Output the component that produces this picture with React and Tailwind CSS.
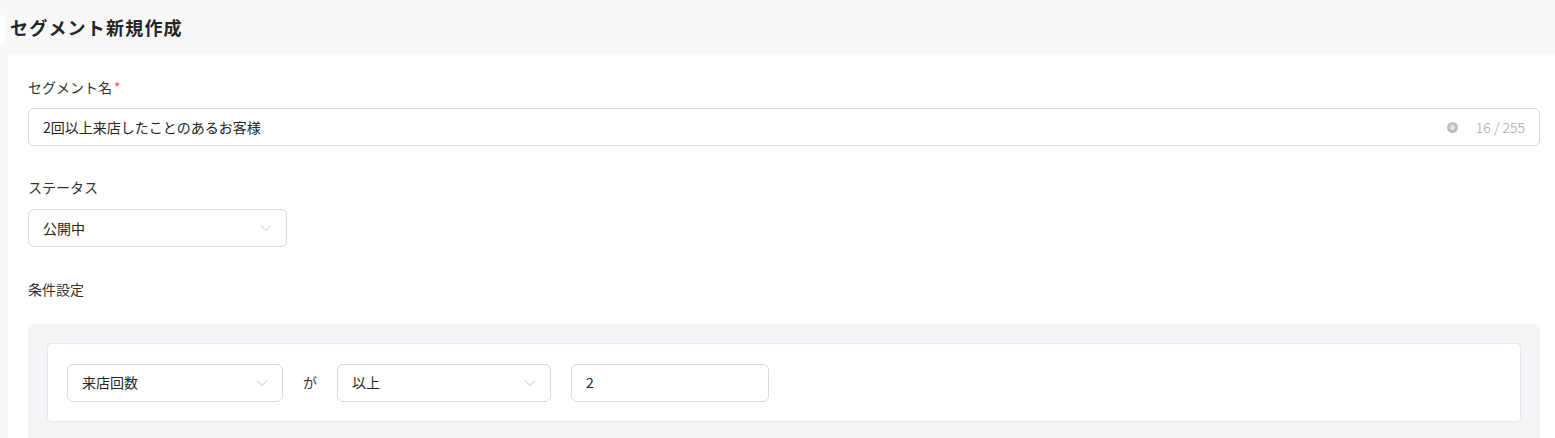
import React from "react";

const font = { fontFamily: '"Noto Sans CJK JP", "Noto Sans", sans-serif' };

function Chevron() {
  return (
    <svg width="12" height="8" viewBox="0 0 12 8" fill="none" className="shrink-0">
      <path d="M1 1.5 L6 6.5 L11 1.5" stroke="#c4c4c4" strokeWidth="1" />
    </svg>
  );
}

function Select({ value, className }) {
  return (
    <div
      className={`h-[38px] flex items-center justify-between rounded-md border border-[#d9d9d9] bg-white pl-[14px] pr-[14px] text-[14px] text-[#262626] ${className}`}
    >
      <span>{value}</span>
      <Chevron />
    </div>
  );
}

export default function App() {
  return (
    <div style={font} className="w-[1555px] h-[438px] overflow-hidden bg-[#f8f8f8] relative">
      {/* left edge rounded bit */}
      <div className="absolute left-[-10px] top-[14px] w-[16px] h-[32px] rounded-full bg-white" />

      <div className="h-[54px] flex items-center pl-[10px]">
        <h1 className="text-[18px] font-bold text-[#262626] tracking-[1.2px]">セグメント新規作成</h1>
      </div>

      <div className="ml-[8px] bg-white h-[400px] pl-[20px] pr-[15px] pt-[23px]">
        <div className="text-[14px] text-[#333] leading-[20px]">
          セグメント名<span className="text-[#ff4d4f] ml-[2px]">*</span>
        </div>
        <div className="mt-[11px] h-[38px] flex items-center rounded-md border border-[#d9d9d9] pl-[14px] pr-[14px] text-[14px] text-[#262626]">
          <span className="flex-1">2回以上来店したことのあるお客様</span>
          <span className="w-[11px] h-[11px] rounded-full bg-[#bfbfbf] mr-[18px] flex items-center justify-center">
            <span className="w-[5px] h-[5px] rounded-full bg-[#e3e3e3]" />
          </span>
          <span className="text-[#a6a6a6] text-[14px] font-light">16 / 255</span>
        </div>

        <div className="mt-[31px] text-[14px] text-[#333] leading-[20px]">ステータス</div>
        <Select value="公開中" className="mt-[12px] w-[259px]" />

        <div className="mt-[32px] text-[14px] text-[#333] leading-[20px]">条件設定</div>

        <div className="mt-[25px] rounded-lg bg-[#f3f4f6] p-[19px] pb-[40px]">
          <div className="h-[79px] rounded border border-[#e5e7eb] bg-white flex items-center pl-[19px] gap-[20px]">
            <Select value="来店回数" className="w-[216px]" />
            <span className="text-[14px] text-[#333]">が</span>
            <Select value="以上" className="w-[214px]" />
            <div className="w-[198px] h-[38px] flex items-center rounded-md border border-[#d9d9d9] pl-[14px] text-[14px] text-[#262626]">
              2
            </div>
          </div>
        </div>
      </div>
    </div>
  );
}
